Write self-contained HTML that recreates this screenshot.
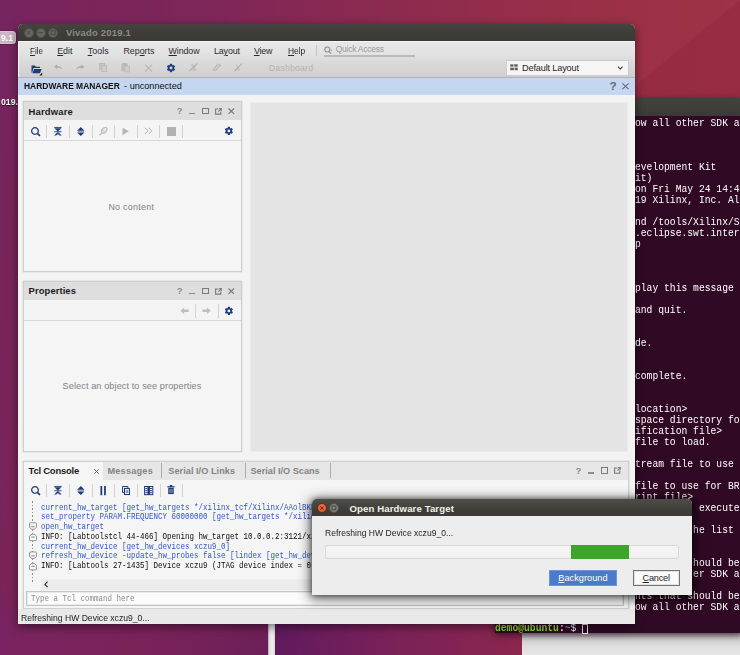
<!DOCTYPE html>
<html>
<head>
<meta charset="utf-8">
<style>
*{box-sizing:border-box;margin:0;padding:0}
html,body{width:740px;height:655px;overflow:hidden}
body{font-family:"Liberation Sans",sans-serif;font-size:10px;color:#222;position:relative;background:#7a2655}
.a{position:absolute}
.t{position:absolute;white-space:nowrap;line-height:1}
u{text-decoration:underline;text-underline-offset:1px;text-decoration-thickness:.7px}
svg{position:absolute;overflow:visible}
.mono{position:absolute;font-family:"Liberation Mono",monospace;white-space:pre;transform-origin:0 0}
.b{color:#3156cf}
</style>
</head>
<body>
<div class="a" style="left:0.00px;top:0.00px;width:740.00px;height:655.00px;background:linear-gradient(90deg,#77255f 0%,#7c2659 25%,#8b2a50 50%,#9a3046 80%,#9e3247 100%)"></div>
<div class="a" style="left:0.00px;top:90.00px;width:300.00px;height:565.00px;background:linear-gradient(180deg,rgba(119,36,92,0),#77245c 60px,#7a2459 100%)"></div>
<svg style="left:640px;top:0" width="100" height="100" viewBox="0 0 100 100"><path d="M100 0V100H-22z" fill="#942a40" opacity=".7"/></svg>
<div class="a" style="left:275.00px;top:600.00px;width:248.00px;height:55.00px;background:linear-gradient(90deg,#5f1a5d 0,#6c1d5c 20%,#7b2257 50%,#8b264e 100%)"></div>
<div class="a" style="left:0.00px;top:590.00px;width:268.00px;height:65.00px;background:linear-gradient(100deg,#792460 0,#79245d 25%,#79235b 50%,#742159 78%,#6c1f57 100%);-webkit-mask-image:linear-gradient(transparent,#000 30px);mask-image:linear-gradient(transparent,#000 30px)"></div>
<div class="a" style="left:267.50px;top:600.00px;width:7.50px;height:55.00px;background:linear-gradient(90deg,#b9a3b3 0,#e4e4e4 25%,#ededed 70%,#d4d2d3 100%)"></div>
<div class="a" style="left:522.40px;top:630.00px;width:218.00px;height:25.00px;background:linear-gradient(180deg,#8d7a86 0,#a89ea4 5px,#c6c2c4 8px,#d6d5d5 12px,#dfdfdf 17px,#e7e7e7 100%)"></div>
<div class="a" style="left:-4.00px;top:30.90px;width:19.70px;height:12.70px;border-radius:3.500px;background:rgba(250,255,252,.66);border:1px solid rgba(255,255,255,.2);box-shadow:0 0 2px rgba(40,0,30,.7)"></div>
<div class="t" style="left:1.00px;top:34.00px;font-size:9.30px;letter-spacing:0.000px;color:#fff;font-weight:bold;transform:scaleX(0.9202);transform-origin:0 0;">9.1</div>
<div class="t" style="left:0.60px;top:97.00px;font-size:9.59px;letter-spacing:0.000px;color:#fff;font-weight:bold;text-shadow:0 1px 1px rgba(0,0,0,.7);transform:scaleX(0.9105);transform-origin:0 0;">019.</div>
<div class="a" style="left:494.50px;top:98.20px;width:246.00px;height:534.80px;background:#300a24;box-shadow:0 2px 7px rgba(0,0,0,.5)"></div>
<div class="a" style="left:494.50px;top:98.20px;width:246.00px;height:17.60px;background:linear-gradient(#43423d,#3b3a36)"></div>
<div class="mono" style="left:635.3px;top:118.49px;font-size:11.0px;line-height:10.977px;color:#fff;transform:scaleX(0.8803)">ow all other SDK a



evelopment Kit
it)
on Fri May 24 14:4
19 Xilinx, Inc. Al

nd /tools/Xilinx/S
.eclipse.swt.inter
p



play this message

and quit.


de.


complete.


location&gt;
space directory fo
ification file&gt;
file to load.

tream file to use

file to use for BR
ript file&gt;
           executed

          he list o


          hould be
          er SDK a

nts that should be
ow all other SDK a</div>
<div class="mono" style="left:495.3px;top:623.43px;font-size:11.0px;line-height:10.977px;color:#fff;font-weight:bold;transform:scaleX(0.8803)"><span style="color:#8ae234">demo@ubuntu</span>:<span style="color:#729fcf">~</span><span style="font-weight:normal">$</span></div>
<div class="a" style="left:582.20px;top:623.60px;width:6.20px;height:10.20px;border:1px solid #e8e8e8"></div>
<div class="a" style="left:18.40px;top:23.70px;width:616.60px;height:600.20px;background:#f3f3f3;border-radius:5px 5px 0 0;box-shadow:0 3px 10px rgba(0,0,0,.5)"></div>
<div class="a" style="left:18.40px;top:23.70px;width:616.60px;height:17.10px;background:linear-gradient(#44433f,#3d3c38 60%,#3b3a36);border-radius:5px 5px 0 0"></div>
<div class="a" style="left:23.50px;top:27.70px;width:10.00px;height:10.00px;border-radius:50%;background:#67665f;border:.7px solid #504f4a"></div>
<div class="a" style="left:35.70px;top:27.70px;width:10.00px;height:10.00px;border-radius:50%;background:#67665f;border:.7px solid #504f4a"></div>
<div class="a" style="left:48.20px;top:27.70px;width:10.00px;height:10.00px;border-radius:50%;background:#67665f;border:.7px solid #504f4a"></div>
<svg style="left:0;top:0" width="80" height="45" viewBox="0 0 80 45"><g stroke="#45443f" stroke-width=".9" fill="none"><path d="M26.700 30.900l3.600 3.600M30.300 30.900l-3.600 3.600"/><path d="M38.500 32.700h4.400"/><rect x="51.200" y="30.700" width="4" height="4"/></g></svg>
<div class="t" style="left:65.90px;top:28.00px;font-size:9.45px;letter-spacing:0.214px;color:#8e8c82;font-weight:bold;">Vivado 2019.1</div>
<div class="a" style="left:18.40px;top:41.00px;width:616.60px;height:36.30px;background:linear-gradient(#f8f8f8 0,#f4f4f4 1px,#e7e7e7 1.500px,#e3e3e3 12px,#dbdbdb 20px,#d4d4d4 30px,#cecece 100%);border-left:1px solid #f6f6f6"></div>
<div class="a" style="left:18.40px;top:76.60px;width:616.60px;height:1.00px;background:#b4b4b4"></div>
<div class="t" style="left:29.70px;top:47.00px;font-size:8.87px;letter-spacing:0.000px;color:#2a2a2a;transform:scaleX(0.9099);transform-origin:0 0;"><u>F</u>ile</div>
<div class="t" style="left:57.20px;top:47.00px;font-size:8.87px;letter-spacing:0.007px;color:#2a2a2a;"><u>E</u>dit</div>
<div class="t" style="left:87.70px;top:47.00px;font-size:8.87px;letter-spacing:0.050px;color:#2a2a2a;"><u>T</u>ools</div>
<div class="t" style="left:123.40px;top:47.00px;font-size:8.87px;letter-spacing:0.009px;color:#2a2a2a;">Rep<u>o</u>rts</div>
<div class="t" style="left:168.60px;top:47.00px;font-size:8.87px;letter-spacing:-0.107px;color:#2a2a2a;"><u>W</u>indow</div>
<div class="t" style="left:214.00px;top:47.00px;font-size:8.87px;letter-spacing:-0.124px;color:#2a2a2a;">La<u>y</u>out</div>
<div class="t" style="left:254.00px;top:47.00px;font-size:8.87px;letter-spacing:-0.219px;color:#2a2a2a;"><u>V</u>iew</div>
<div class="t" style="left:287.60px;top:47.00px;font-size:8.87px;letter-spacing:0.000px;color:#2a2a2a;transform:scaleX(0.9487);transform-origin:0 0;"><u>H</u>elp</div>
<div class="a" style="left:315.50px;top:44.50px;width:1.00px;height:11.90px;background:#c2c2c2"></div>
<div class="a" style="left:323.80px;top:55.40px;width:90.80px;height:1.40px;background:#bababa"></div>
<svg style="left:324.20px;top:45.60px" width="9" height="9" viewBox="0 0 9 9"><circle cx="3.300" cy="3.500" r="2.500" fill="none" stroke="#8c8c8c" stroke-width="1.100"/><path d="M5 5.400l2 2.200" stroke="#8c8c8c" stroke-width="1.200"/><circle cx="7.600" cy="4.200" r=".6" fill="#8c8c8c"/></svg>
<div class="t" style="left:335.70px;top:45.00px;font-size:8.43px;letter-spacing:-0.218px;color:#979797;">Quick Access</div>
<svg style="left:30.80px;top:63.60px" width="12.5" height="11.5" viewBox="0 0 14 13"><path d="M0.500 1.800h3.800l1 1.300h4.800v1.500H2.800L1.200 9.800H0.500z" fill="#1d3a7a"/><path d="M3.400 5.600h8.600L10 10.400H1.500z" fill="#1d3a7a"/><path d="M9.300 13h3.300V9.700z" fill="#222"/></svg>
<svg style="left:53.30px;top:64.40px" width="10.4" height="7" viewBox="0 0 12 9"><path d="M0.500 3.600L4.600 0.400v2.100c3.600 0 6 1.600 6.600 5-1.600-2-3.600-2.700-6.600-2.600v2z" fill="#acacac"/></svg>
<svg style="left:75.40px;top:64.40px" width="10.4" height="7" viewBox="0 0 12 9"><path d="M11.500 3.600L7.400 0.400v2.100c-3.600 0-6 1.600-6.600 5 1.600-2 3.600-2.700 6.600-2.600v2z" fill="#acacac"/></svg>
<svg style="left:98.90px;top:63.40px" width="8.7" height="9" viewBox="0 0 10 11"><rect x="0.500" y="0.500" width="6" height="7.500" fill="#c4c4c4" stroke="#b8b8b8"/><rect x="3" y="2.800" width="6" height="7.600" fill="#cdcdcd" stroke="#b8b8b8"/></svg>
<svg style="left:121.20px;top:63.20px" width="9.5" height="9.4" viewBox="0 0 11 12"><rect x="0.500" y="1.200" width="7" height="9" fill="#bfbfbf" stroke="#b8b8b8"/><rect x="2.500" y="0" width="3" height="2.200" fill="#b0b0b0"/><rect x="4.500" y="4" width="6" height="7.400" fill="#cdcdcd" stroke="#b8b8b8"/></svg>
<svg style="left:143.90px;top:63.90px" width="9" height="8.2" viewBox="0 0 10 10"><path d="M0.700 0.700l8.600 8.600M9.300 0.700L0.700 9.300" stroke="#b6b6b6" stroke-width="1.400" fill="none"/></svg>
<svg style="left:166.30px;top:62.90px" width="10" height="10" viewBox="0 0 24 24"><path fill="#1d3a7a" d="M19.4 13c.04-.33.06-.66.06-1s-.02-.67-.07-1l2.1-1.65c.2-.15.25-.42.13-.64l-2-3.46c-.12-.22-.39-.3-.61-.22l-2.49 1c-.52-.4-1.08-.73-1.69-.98l-.38-2.65A.49.49 0 0 0 14 2h-4c-.25 0-.46.18-.49.42l-.38 2.65c-.61.25-1.17.59-1.69.98l-2.49-1c-.23-.09-.49 0-.61.22l-2 3.46c-.13.22-.07.49.13.64L4.57 11c-.04.33-.07.67-.07 1s.03.67.07 1l-2.110 1.65c-.2.15-.25.42-.13.64l2 3.46c.12.22.39.3.61.22l2.49-1c.52.4 1.08.73 1.69.98l.38 2.65c.03.24.24.42.49.42h4c.25 0 .46-.18.49-.42l.38-2.65c.61-.25 1.17-.59 1.69-.98l2.49 1c.23.09.49 0 .61-.22l2-3.46c.12-.22.07-.49-.13-.64L19.4 13zM12 15.5A3.5 3.5 0 1 1 12 8.500a3.500 3.500 0 0 1 0 7z"/></svg>
<svg style="left:189.00px;top:63.20px" width="9" height="8.5" viewBox="0 0 9 8.500"><path d="M1.500 1.300L4.800 1.600L6 4.200L8 7.600L3.300 7.800L4.300 5.300z" fill="#c0c0c0"/><path d="M0.500 8L8.300 0.500" stroke="#b0b0b0" stroke-width="1.100"/></svg>
<svg style="left:211.70px;top:63.20px" width="9.5" height="8.5" viewBox="0 0 9.500 8.500"><path d="M0.800 7.300L6.300 1M3.200 7.800L8.800 1.500" stroke="#b8b8b8" stroke-width="1.200" fill="none"/><path d="M0.800 7.300L3.200 7.800M6.300 1L8.800 1.500" stroke="#c2c2c2" stroke-width="1"/></svg>
<svg style="left:234.40px;top:63.20px" width="8.6" height="8.5" viewBox="0 0 8.600 8.500"><path d="M1.600 0.800L4.600 3.600L5.800 7.800L3.600 7.800L3 4.400z" fill="#c2c2c2"/><path d="M0.600 8L8 0.600" stroke="#b0b0b0" stroke-width="1.100"/></svg>
<div class="t" style="left:268.80px;top:64.00px;font-size:8.72px;letter-spacing:0.192px;color:#b4b4b4;">Dashboard</div>
<div class="a" style="left:505.60px;top:60.10px;width:123.20px;height:15.60px;background:#f5f5f5;border:1px solid #cdcdcd"></div>
<svg style="left:510.00px;top:64.40px" width="8" height="6.6" viewBox="0 0 8 7"><rect x="0" y="0.300" width="3.400" height="2.500" fill="#606060"/><rect x="4.200" y="0.300" width="3.800" height="2.500" fill="#606060"/><rect x="0" y="3.900" width="3.800" height="2.700" fill="#606060"/><rect x="4.600" y="3.900" width="3.400" height="2.700" fill="#606060"/></svg>
<div class="t" style="left:522.00px;top:64.00px;font-size:9.16px;letter-spacing:-0.158px;color:#1e1e1e;">Default Layout</div>
<svg style="left:616.50px;top:66.40px" width="6.5" height="4" viewBox="0 0 7 5"><path d="M0.600 0.800l2.900 3 2.900-3" stroke="#333" stroke-width="1.300" fill="none"/></svg>
<div class="a" style="left:18.40px;top:77.50px;width:616.60px;height:17.20px;background:#c5d6f1"></div>
<div class="t" style="left:24.40px;top:82.00px;font-size:9.16px;letter-spacing:0.000px;color:#111;font-weight:bold;transform:scaleX(0.9231);transform-origin:0 0;">HARDWARE MANAGER</div>
<div class="t" style="left:124.10px;top:82.00px;font-size:9.16px;letter-spacing:-0.028px;color:#111;">- unconnected</div>
<div class="t" style="left:609.40px;top:80.00px;font-size:11.63px;letter-spacing:0.000px;color:#62656c;font-weight:bold;">?</div>
<svg style="left:622.30px;top:82.80px" width="7" height="6.5" viewBox="0 0 7 6.500"><path d="M0.400 0.400l6.200 5.700M6.600 0.400L0.400 6.100" stroke="#6c7078" stroke-width="1.200" fill="none"/></svg>
<div class="a" style="left:22.80px;top:101.20px;width:219.20px;height:170.40px;background:#f5f5f5;border:1px solid #cfcfcf;box-shadow:0 0 0 .5px #dcdcdc"></div>
<div class="a" style="left:24.30px;top:102.40px;width:216.40px;height:17.40px;background:#dedede"></div>
<div class="a" style="left:24.30px;top:119.80px;width:216.40px;height:21.50px;background:#f4f4f4;border-bottom:1px solid #d9d9d9"></div>
<div class="t" style="left:28.60px;top:107.00px;font-size:9.45px;letter-spacing:0.163px;color:#1b1b1b;font-weight:bold;">Hardware</div>
<div class="t" style="left:176.70px;top:106.00px;font-size:9.45px;letter-spacing:0.000px;color:#8c8c8c;font-weight:bold;">?</div>
<div class="a" style="left:189.20px;top:112.90px;width:6.30px;height:1.30px;background:#8c8c8c"></div>
<div class="a" style="left:201.80px;top:107.80px;width:7.00px;height:6.40px;border:1.1px solid #7a7a7a"></div>
<svg style="left:215.20px;top:107.50px" width="6.800000000000011" height="6.700000000000003" viewBox="0 0 6.80 6.70"><g fill="none" stroke="#7a7a7a" stroke-width="1.100"><path d="M3.40 1h-2.80v5.10h5.20v-2.68"/><path d="M3.40 3.69L6.30 0.8M4.22 0.600h2.08v2.08"/></g></svg>
<svg style="left:227.80px;top:107.80px" width="6.599999999999994" height="6.700000000000003" viewBox="0 0 6.60 6.70"><path d="M0.5 0.5L6.10 5.90M6.10 0.5L0.5 5.90" stroke="#7a7a7a" stroke-width="1.200" fill="none"/></svg>
<svg style="left:30.70px;top:126.70px" width="9.6" height="9.2" viewBox="0 0 9.600 9.200"><circle cx="4" cy="4" r="3.350" fill="none" stroke="#1d3a7a" stroke-width="1.250"/><path d="M6.600 6.600l2.400 2.200" stroke="#1d3a7a" stroke-width="1.700"/></svg>
<svg style="left:53.90px;top:126.90px" width="7.8" height="8.6" viewBox="0 0 7.800 8.600"><path d="M0.200 0.450h7.400M0.200 4.750h7.400" stroke="#1d3a7a" stroke-width=".9"/><path d="M0.300 1.300h7.200L3.900 4.400zM3.900 5.100L7.700 8.600H5.600L3.900 7L2.200 8.600H0.100z" fill="#1d3a7a"/></svg>
<svg style="left:77.00px;top:126.60px" width="7.6" height="9.2" viewBox="0 0 7.600 9.200"><path d="M0.100 3.700h7.400L3.800 0.100zM0.100 5.500h7.400L3.800 9.100z" fill="#1d3a7a"/><path d="M0.600 4.600h6.400" stroke="#1d3a7a" stroke-width=".5"/></svg>
<div class="a" style="left:46.10px;top:124.50px;width:1.00px;height:13.00px;background:#d2d2d2"></div>
<div class="a" style="left:68.80px;top:124.50px;width:1.00px;height:13.00px;background:#d2d2d2"></div>
<div class="a" style="left:91.60px;top:124.50px;width:1.00px;height:13.00px;background:#d2d2d2"></div>
<div class="a" style="left:114.20px;top:124.50px;width:1.00px;height:13.00px;background:#d2d2d2"></div>
<div class="a" style="left:136.70px;top:124.50px;width:1.00px;height:13.00px;background:#d2d2d2"></div>
<div class="a" style="left:159.10px;top:124.50px;width:1.00px;height:13.00px;background:#d2d2d2"></div>
<div class="a" style="left:181.90px;top:124.50px;width:1.00px;height:13.00px;background:#d2d2d2"></div>
<svg style="left:99.00px;top:126.70px" width="8.6" height="8.6" viewBox="0 0 8.600 8.600"><path d="M0.400 8.200l3-3" stroke="#bdbdbd" stroke-width="1.300" fill="none"/><ellipse cx="5.300" cy="3.300" rx="3.300" ry="2.100" transform="rotate(-45 5.300 3.300)" fill="#e9e9e9" stroke="#bdbdbd" stroke-width="1.300"/><path d="M3.300 2.600l2.700 2.700" stroke="#cacaca" stroke-width="1"/></svg>
<svg style="left:122.10px;top:127.20px" width="7.2" height="8.6" viewBox="0 0 9 11"><path d="M0.500 0.500v10l8-5z" fill="#b6b6b6"/></svg>
<svg style="left:143.90px;top:127.40px" width="8.9" height="7.7" viewBox="0 0 11 10"><path d="M1 1l4 4-4 4M6 1l4 4-4 4" stroke="#aeaeae" stroke-width="1.300" fill="none"/></svg>
<div class="a" style="left:166.70px;top:126.50px;width:9.20px;height:9.20px;background:#b2b2b2"></div>
<svg style="left:224.30px;top:126.40px" width="9.8" height="9.8" viewBox="0 0 24 24"><path fill="#1d3a7a" d="M19.4 13c.04-.33.06-.66.06-1s-.02-.67-.07-1l2.1-1.65c.2-.15.25-.42.13-.64l-2-3.46c-.12-.22-.39-.3-.61-.22l-2.49 1c-.52-.4-1.08-.73-1.69-.98l-.38-2.65A.49.49 0 0 0 14 2h-4c-.25 0-.46.18-.49.42l-.38 2.65c-.61.25-1.17.59-1.69.98l-2.49-1c-.23-.09-.49 0-.61.22l-2 3.46c-.13.22-.07.49.13.64L4.57 11c-.04.33-.07.67-.07 1s.03.67.07 1l-2.110 1.65c-.2.15-.25.42-.13.64l2 3.46c.12.22.39.3.61.22l2.49-1c.52.4 1.08.73 1.69.98l.38 2.65c.03.24.24.42.49.42h4c.25 0 .46-.18.49-.42l.38-2.65c.61-.25 1.17-.59 1.69-.98l2.49 1c.23.09.49 0 .61-.22l2-3.46c.12-.22.07-.49-.13-.64L19.4 13zM12 15.5A3.5 3.5 0 1 1 12 8.500a3.500 3.500 0 0 1 0 7z"/></svg>
<div class="t" style="left:108.40px;top:203.00px;font-size:8.87px;letter-spacing:0.313px;color:#828282;">No content</div>
<div class="a" style="left:22.80px;top:281.20px;width:219.20px;height:170.80px;background:#f5f5f5;border:1px solid #cfcfcf;box-shadow:0 0 0 .5px #dcdcdc"></div>
<div class="a" style="left:24.30px;top:282.40px;width:216.40px;height:17.40px;background:#dedede"></div>
<div class="a" style="left:24.30px;top:299.80px;width:216.40px;height:21.50px;background:#f4f4f4;border-bottom:1px solid #d9d9d9"></div>
<div class="t" style="left:28.60px;top:286.00px;font-size:9.45px;letter-spacing:0.074px;color:#1b1b1b;font-weight:bold;">Properties</div>
<div class="t" style="left:176.70px;top:286.00px;font-size:9.45px;letter-spacing:0.000px;color:#8c8c8c;font-weight:bold;">?</div>
<div class="a" style="left:189.20px;top:292.90px;width:6.30px;height:1.30px;background:#8c8c8c"></div>
<div class="a" style="left:201.80px;top:287.80px;width:7.00px;height:6.40px;border:1.1px solid #7a7a7a"></div>
<svg style="left:215.20px;top:287.50px" width="6.800000000000011" height="6.699999999999989" viewBox="0 0 6.80 6.70"><g fill="none" stroke="#7a7a7a" stroke-width="1.100"><path d="M3.40 1h-2.80v5.10h5.20v-2.68"/><path d="M3.40 3.68L6.30 0.8M4.22 0.600h2.08v2.08"/></g></svg>
<svg style="left:227.80px;top:287.80px" width="6.599999999999994" height="6.699999999999989" viewBox="0 0 6.60 6.70"><path d="M0.5 0.5L6.10 5.90M6.10 0.5L0.5 5.90" stroke="#7a7a7a" stroke-width="1.200" fill="none"/></svg>
<svg style="left:179.50px;top:306.90px" width="9.2" height="7.4" viewBox="0 0 10 8"><path d="M0.500 4l4-3.500v2.200h5v2.600h-5v2.200z" fill="#bebebe"/></svg>
<div class="a" style="left:195.10px;top:304.00px;width:1.00px;height:14.00px;background:#d2d2d2"></div>
<svg style="left:201.80px;top:306.90px" width="9.2" height="7.4" viewBox="0 0 10 8"><path d="M9.500 4l-4-3.500v2.200h-5v2.600h5v2.200z" fill="#bebebe"/></svg>
<div class="a" style="left:217.50px;top:304.00px;width:1.00px;height:14.00px;background:#d2d2d2"></div>
<svg style="left:224.30px;top:305.90px" width="9.8" height="9.8" viewBox="0 0 24 24"><path fill="#1d3a7a" d="M19.4 13c.04-.33.06-.66.06-1s-.02-.67-.07-1l2.1-1.65c.2-.15.25-.42.13-.64l-2-3.46c-.12-.22-.39-.3-.61-.22l-2.49 1c-.52-.4-1.08-.73-1.69-.98l-.38-2.65A.49.49 0 0 0 14 2h-4c-.25 0-.46.18-.49.42l-.38 2.65c-.61.25-1.17.59-1.69.98l-2.49-1c-.23-.09-.49 0-.61.22l-2 3.46c-.13.22-.07.49.13.64L4.57 11c-.04.33-.07.67-.07 1s.03.67.07 1l-2.110 1.65c-.2.15-.25.42-.13.64l2 3.46c.12.22.39.3.61.22l2.49-1c.52.4 1.08.73 1.69.98l.38 2.65c.03.24.24.42.49.42h4c.25 0 .46-.18.49-.42l.38-2.65c.61-.25 1.17-.59 1.69-.98l2.49 1c.23.09.49 0 .61-.22l2-3.46c.12-.22.07-.49-.13-.64L19.4 13zM12 15.5A3.5 3.5 0 1 1 12 8.500a3.500 3.500 0 0 1 0 7z"/></svg>
<div class="t" style="left:62.60px;top:382.00px;font-size:9.16px;letter-spacing:0.085px;color:#828282;">Select an object to see properties</div>
<div class="a" style="left:250.40px;top:101.50px;width:378.10px;height:350.40px;background:#e4e4e4;border:1px solid #ebebeb"></div>
<div class="a" style="left:22.80px;top:460.80px;width:606.00px;height:148.40px;background:#f5f5f5;border:1px solid #d0d0d0;box-shadow:0 0 0 .5px #dcdcdc"></div>
<div class="a" style="left:103.00px;top:461.80px;width:524.80px;height:17.80px;background:#e6e6e6"></div>
<div class="t" style="left:28.60px;top:466.00px;font-size:9.45px;letter-spacing:-0.224px;color:#1b1b1b;font-weight:bold;">Tcl Console</div>
<svg style="left:94.20px;top:468.80px" width="5" height="5" viewBox="0 0 5 5"><path d="M0.300 0.300l4.400 4.400M4.700 0.300l-4.400 4.400" stroke="#666" stroke-width=".9" fill="none"/></svg>
<div class="t" style="left:107.40px;top:467.00px;font-size:9.16px;letter-spacing:0.232px;color:#848484;font-weight:bold;">Messages</div>
<div class="a" style="left:160.90px;top:463.00px;width:1.00px;height:15.00px;background:#adadad"></div>
<div class="t" style="left:168.30px;top:467.00px;font-size:9.16px;letter-spacing:0.036px;color:#848484;font-weight:bold;">Serial I/O Links</div>
<div class="a" style="left:244.70px;top:463.00px;width:1.00px;height:15.00px;background:#adadad"></div>
<div class="t" style="left:250.50px;top:467.00px;font-size:9.16px;letter-spacing:-0.002px;color:#848484;font-weight:bold;">Serial I/O Scans</div>
<div class="a" style="left:330.00px;top:463.00px;width:1.00px;height:15.00px;background:#adadad"></div>
<div class="t" style="left:575.50px;top:466.00px;font-size:9.59px;letter-spacing:0.000px;color:#8c8c8c;font-weight:bold;">?</div>
<div class="a" style="left:588.00px;top:472.30px;width:6.20px;height:1.30px;background:#8c8c8c"></div>
<div class="a" style="left:600.50px;top:467.10px;width:7.00px;height:6.50px;border:1.1px solid #7a7a7a"></div>
<svg style="left:614.00px;top:466.80px" width="6.7999999999999545" height="6.800000000000011" viewBox="0 0 6.80 6.80"><g fill="none" stroke="#7a7a7a" stroke-width="1.100"><path d="M3.40 1h-2.80v5.20h5.20v-2.72"/><path d="M3.40 3.74L6.30 0.8M4.22 0.600h2.08v2.08"/></g></svg>
<svg style="left:30.70px;top:485.70px" width="9.6" height="9.2" viewBox="0 0 9.600 9.200"><circle cx="4" cy="4" r="3.350" fill="none" stroke="#1d3a7a" stroke-width="1.250"/><path d="M6.600 6.600l2.400 2.200" stroke="#1d3a7a" stroke-width="1.700"/></svg>
<svg style="left:53.90px;top:485.90px" width="7.8" height="8.6" viewBox="0 0 7.800 8.600"><path d="M0.200 0.450h7.400M0.200 4.750h7.400" stroke="#1d3a7a" stroke-width=".9"/><path d="M0.300 1.300h7.200L3.900 4.400zM3.900 5.100L7.700 8.600H5.600L3.900 7L2.200 8.600H0.100z" fill="#1d3a7a"/></svg>
<svg style="left:76.80px;top:485.60px" width="7.6" height="9.2" viewBox="0 0 7.600 9.200"><path d="M0.100 3.700h7.400L3.800 0.100zM0.100 5.500h7.400L3.800 9.100z" fill="#1d3a7a"/><path d="M0.600 4.600h6.400" stroke="#1d3a7a" stroke-width=".5"/></svg>
<div class="a" style="left:46.00px;top:483.50px;width:1.00px;height:13.30px;background:#d2d2d2"></div>
<div class="a" style="left:68.80px;top:483.50px;width:1.00px;height:13.30px;background:#d2d2d2"></div>
<div class="a" style="left:91.70px;top:483.50px;width:1.00px;height:13.30px;background:#d2d2d2"></div>
<div class="a" style="left:114.20px;top:483.50px;width:1.00px;height:13.30px;background:#d2d2d2"></div>
<div class="a" style="left:136.80px;top:483.50px;width:1.00px;height:13.30px;background:#d2d2d2"></div>
<div class="a" style="left:159.50px;top:483.50px;width:1.00px;height:13.30px;background:#d2d2d2"></div>
<div class="a" style="left:182.00px;top:483.50px;width:1.00px;height:13.30px;background:#d2d2d2"></div>
<svg style="left:99.90px;top:485.60px" width="6.3" height="9.2" viewBox="0 0 6 10"><path d="M1 0v10M5 0v10" stroke="#1d3a7a" stroke-width="1.900"/></svg>
<svg style="left:121.80px;top:485.80px" width="8.3" height="9" viewBox="0 0 10 11"><path d="M0.600 0.600h6.500v2M0.600 0.600v7.500h2" stroke="#1d3a7a" stroke-width="1.200" fill="none"/><rect x="3" y="3" width="6" height="7.400" fill="none" stroke="#1d3a7a" stroke-width="1.300"/><rect x="4.500" y="5" width="3" height="3.500" fill="#1d3a7a" opacity=".5"/></svg>
<svg style="left:143.60px;top:485.60px" width="9.4" height="9.2" viewBox="0 0 11 11"><rect x="0.600" y="0.600" width="9.800" height="9.800" fill="none" stroke="#1d3a7a" stroke-width="1.200"/><rect x="4" y="0.600" width="3" height="9.800" fill="#1d3a7a"/><path d="M1.500 3h2.500M1.500 5.500h2.500M1.500 8h2.500M7 3h2.500M7 5.500h2.500M7 8h2.500" stroke="#1d3a7a" stroke-width="1.100"/></svg>
<svg style="left:167.00px;top:485.40px" width="8" height="9.5" viewBox="0 0 9 12"><path d="M0 2.300h9M3 0.900h3" stroke="#1d3a7a" stroke-width="1.500"/><path d="M1 3.800h7v7.700H1z" fill="#1d3a7a"/><path d="M3.200 5v5M5.800 5v5" stroke="#f4f4f4" stroke-width=".8"/></svg>
<div class="a" style="left:32.00px;top:500.50px;width:1.00px;height:81.00px;background:repeating-linear-gradient(180deg,#8c8c8c 0,#8c8c8c 1.600px,transparent 1.600px,transparent 3.600px)"></div>
<div class="mono" style="left:41px;top:502.59px;width:380px;overflow:hidden;font-size:9.2px;line-height:9.73px;color:#0a0a0a;transform:scaleX(0.8165)"><span class="b">current_hw_target [get_hw_targets */xilinx_tcf/Xilinx/AAolBKRK]</span>
<span class="b">set_property PARAM.FREQUENCY 60000000 [get_hw_targets */xilinx_tcf/Xilinx</span>
<span class="b">open_hw_target</span>
INFO: [Labtoolstcl 44-466] Opening hw_target 10.0.0.2:3121/xilinx_tcf/Xilinx
<span class="b">current_hw_device [get_hw_devices xczu9_0]</span>
<span class="b">refresh_hw_device -update_hw_probes false [lindex [get_hw_devices xczu9_0] 0]</span>
INFO: [Labtools 27-1435] Device xczu9 (JTAG device index = 0) is not programmed</div>
<svg style="left:28.70px;top:521.50px" width="8" height="50" viewBox="0 0 8 50"><g fill="#f5f5f5" stroke="#8c8c8c" stroke-width=".9"><path d="M0.500 1.56q0-.8 .8-.8h5.400q.8 0 .8 .8v3.900l-2.500 1.900h-2l-2.500-1.900z"/><path d="M2.300 4.76h3.400" stroke="#7a7a7a"/><path d="M0.500 17.89q0 .8 .8 .8h5.400q.8 0 .8-.8v-3.900l-2.500-1.900h-2l-2.500 1.900z"/><path d="M2.300 15.09h3.400" stroke="#7a7a7a"/><path d="M0.500 30.75q0-.8 .8-.8h5.400q.8 0 .8 .8v3.900l-2.500 1.900h-2l-2.500-1.900z"/><path d="M2.300 33.95h3.400" stroke="#7a7a7a"/><path d="M0.500 47.08q0 .8 .8 .8h5.400q.8 0 .8-.8v-3.900l-2.500-1.900h-2l-2.500 1.900z"/><path d="M2.300 44.28h3.400" stroke="#7a7a7a"/></g></svg>
<div class="a" style="left:41.00px;top:579.30px;width:586.50px;height:10.40px;background:#ececec"></div>
<svg style="left:44.20px;top:581.30px" width="4.5" height="6.8" viewBox="0 0 5 7"><path d="M4 0.500l-3 3 3 3" stroke="#222" stroke-width="1.200" fill="none"/></svg>
<div class="a" style="left:25.80px;top:591.30px;width:598.60px;height:14.40px;background:#fbfbfb;border:1px solid #c4c4c4;box-shadow:inset 0 0 0 1px #eaeaea"></div>
<div class="mono" style="left:31px;top:594.20px;font-size:9.2px;line-height:9.2px;color:#8c8c8c;transform:scaleX(0.8165)">Type a Tcl command here</div>
<div class="a" style="left:18.40px;top:609.30px;width:616.60px;height:14.60px;background:#e9e9e9"></div>
<div class="t" style="left:21.00px;top:614.00px;font-size:9.16px;letter-spacing:0.000px;color:#1e1e1e;transform:scaleX(0.9386);transform-origin:0 0;">Refreshing HW Device xczu9_0...</div>
<div class="a" style="left:312.20px;top:498.50px;width:380.30px;height:96.50px;background:#ededed;border-radius:5px 5px 0 0;box-shadow:0 2px 12px 2px rgba(0,0,0,.62),0 0 5px rgba(0,0,0,.45)"></div>
<div class="a" style="left:312.20px;top:498.50px;width:380.30px;height:17.50px;background:linear-gradient(#4e4d48,#3c3b37 75%);border-radius:5px 5px 0 0"></div>
<div class="a" style="left:316.60px;top:503.20px;width:10.20px;height:10.20px;border-radius:50%;background:radial-gradient(circle at 50% 35%,#f27b52,#de4b1d);border:.6px solid #6e2c14"></div>
<svg style="left:316.70px;top:503.40px" width="10" height="10" viewBox="0 0 10 10"><path d="M3.200 3.200l3.500 3.500M6.700 3.200L3.200 6.700" stroke="#5e2410" stroke-width="1" fill="none"/></svg>
<div class="a" style="left:328.80px;top:503.20px;width:10.20px;height:10.20px;border-radius:50%;background:#807f79;border:.6px solid #52514c"></div>
<svg style="left:329.00px;top:503.20px" width="10" height="10" viewBox="0 0 10 10"><rect x="3" y="3" width="3.800" height="3.800" stroke="#47463f" stroke-width=".9" fill="none"/></svg>
<div class="t" style="left:349.50px;top:504.00px;font-size:9.59px;letter-spacing:0.122px;color:#f3f1e9;font-weight:bold;">Open Hardware Target</div>
<div class="t" style="left:324.90px;top:529.00px;font-size:9.16px;letter-spacing:0.000px;color:#1e1e1e;transform:scaleX(0.9357);transform-origin:0 0;">Refreshing HW Device xczu9_0...</div>
<div class="a" style="left:324.90px;top:545.20px;width:354.30px;height:13.80px;background:linear-gradient(#f5f5f5,#f0f0f0);border:1px solid #d8d8d8;border-radius:2px"></div>
<div class="a" style="left:570.80px;top:545.40px;width:58.70px;height:13.30px;background:#3aa528"></div>
<div class="a" style="left:549.00px;top:569.70px;width:67.80px;height:16.20px;background:#4a7ac9;border:1px solid #6c94d8"></div>
<div class="t" style="left:558.30px;top:574.00px;font-size:9.16px;letter-spacing:0.037px;color:#fff;"><u>B</u>ackground</div>
<div class="a" style="left:633.00px;top:569.70px;width:46.50px;height:16.20px;background:#fafafa;border:1px solid #747474;box-shadow:inset 0 0 0 1px #e2e2e2"></div>
<div class="t" style="left:642.50px;top:574.00px;font-size:9.16px;letter-spacing:-0.201px;color:#1e1e1e;"><u>C</u>ancel</div>
</body>
</html>
